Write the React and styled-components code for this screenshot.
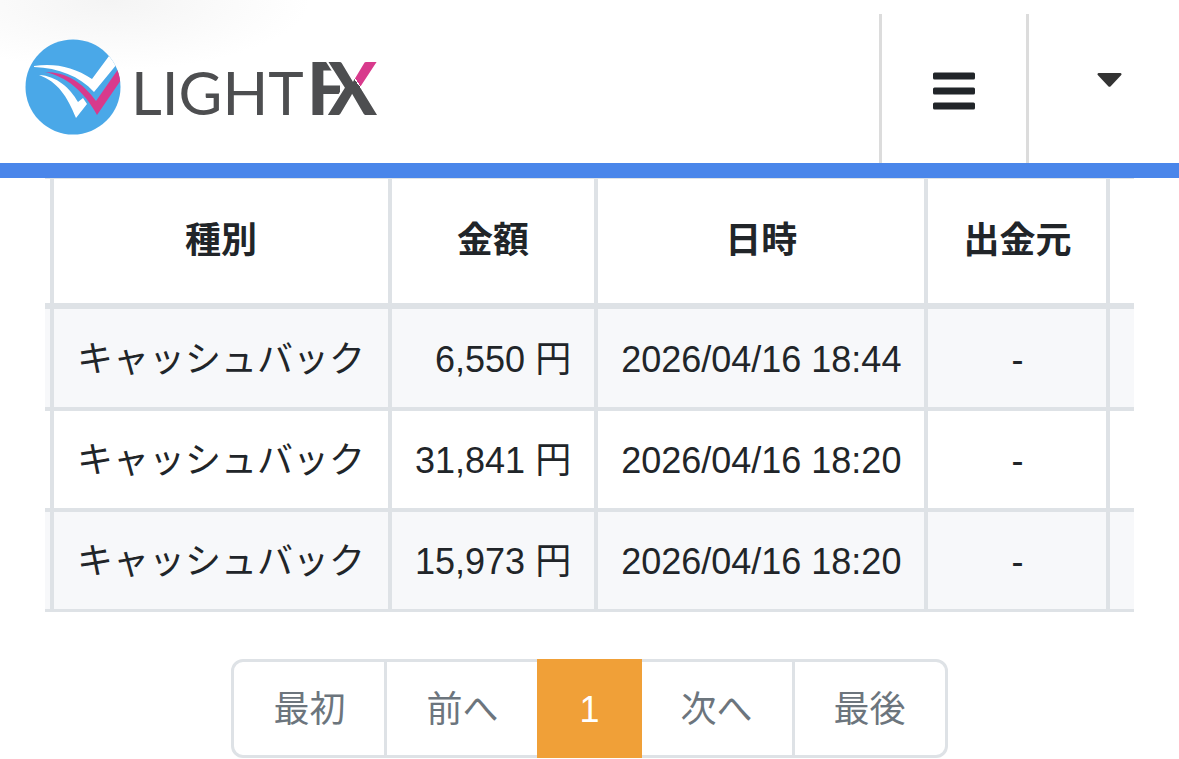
import React, { useState } from "react";
import styled, { createGlobalStyle } from "styled-components";

const GlobalStyle = createGlobalStyle`
  * {
    box-sizing: border-box;
  }

  body {
    margin: 0;
    background-color: #fff;
    color: #212529;
    font-family: "Liberation Sans", "Noto Sans CJK JP", sans-serif;
    font-size: 36px;
  }
`;

const Header = styled.header`
  display: flex;
  align-items: flex-start;
  justify-content: space-between;
  border-bottom: 15px solid #4a86ea;
  background: radial-gradient(ellipse 200px 70px at 110px 0, #f4f4f4, #fff);
`;

const LogoLink = styled.a`
  display: block;
  margin: 39px 0 0 25px;
`;

const LogoSvg = styled.svg`
  display: block;
  width: 352px;
  height: 96px;
`;

const LogoText = styled.text`
  font-family: Lato, "Liberation Sans", sans-serif;
  font-size: ${({ $size }) => $size || 72}px;
  font-weight: ${({ $weight }) => $weight || 400};
  fill: ${({ $fill }) => $fill || "#4d4e50"};
`;

const HeaderMenu = styled.nav`
  display: flex;
  margin-top: 14px;
`;

const HeaderButton = styled.button`
  display: flex;
  justify-content: center;
  width: ${({ $width }) => $width}px;
  height: 149px;
  padding: ${({ $padding }) => $padding};
  border: 0;
  border-left: 3px solid #dcdcdc;
  background: transparent;
  cursor: pointer;
`;

const Main = styled.main`
  padding: 0 45px;
`;

const Table = styled.table`
  width: 100%;
  border-collapse: separate;
  border-spacing: 0;
  line-height: 53px;
  white-space: nowrap;
`;

const Th = styled.th`
  padding: 35px ${({ $wide }) => ($wide ? 35 : 23)}px 36px;
  border-top: 1px solid #dee2e6;
  border-right: 4px solid #dee2e6;
  border-bottom: 6px solid #dee2e6;
  font-weight: 700;
`;

const Td = styled.td`
  padding: 23px 23px 21px;
  border-right: 4px solid #dee2e6;
  border-bottom: 4px solid #dee2e6;
  text-align: ${({ $align }) => $align || "center"};
`;

const EdgeTh = styled(Th)`
  width: ${({ $last }) => ($last ? "100%" : "9px")};
  padding: 0 ${({ $last }) => ($last ? 0 : 5)}px 0 0;
  border-right-width: ${({ $last }) => ($last ? 0 : 4)}px;
`;

const EdgeTd = styled(Td)`
  padding: 0;
  border-right-width: ${({ $last }) => ($last ? 0 : 4)}px;
`;

const Row = styled.tr`
  &:nth-child(odd) {
    background-color: #f7f8fa;
  }

  &:first-child > td {
    padding-top: 24px;
  }

  &:last-child > td {
    border-bottom-width: 3px;
  }
`;

const Pagination = styled.ul`
  display: flex;
  justify-content: center;
  margin: 47px 0 0;
  padding: 0;
  list-style: none;
`;

const PageItem = styled.li`
  & + & {
    margin-left: -3px;
  }
`;

const PageButton = styled.button`
  position: relative;
  z-index: ${({ $active }) => ($active ? 1 : 0)};
  display: block;
  padding: 21px 39px 18px;
  border: 3px solid ${({ $active }) => ($active ? "#f0a038" : "#dee2e6")};
  background-color: ${({ $active }) => ($active ? "#f0a038" : "#fff")};
  color: ${({ $active }) => ($active ? "#fff" : "#6c757d")};
  font: inherit;
  line-height: 54px;
  cursor: pointer;

  ${PageItem}:first-child & {
    border-radius: 12px 0 0 12px;
  }

  ${PageItem}:last-child & {
    border-radius: 0 12px 12px 0;
  }
`;

const rows = [
  { type: "キャッシュバック", amount: "6,550 円", date: "2026/04/16 18:44", source: "-" },
  { type: "キャッシュバック", amount: "31,841 円", date: "2026/04/16 18:20", source: "-" },
  { type: "キャッシュバック", amount: "15,973 円", date: "2026/04/16 18:20", source: "-" },
];

const Logo = () => (
  <LogoSvg viewBox="0 0 352 96" role="img" aria-label="LIGHT FX">
    <defs>
      <clipPath id="disc">
        <circle cx="48" cy="48" r="47.5" />
      </clipPath>
      <clipPath id="behind">
        <rect x="284" y="0" width="31" height="96" />
      </clipPath>
      {/* grey up to the long diagonal of the X, pink past it */}
      <linearGradient id="arm" gradientUnits="userSpaceOnUse" x1="330" y1="41" x2="337" y2="36">
        <stop offset="0" stopColor="#4d4e50" />
        <stop offset="0" stopColor="#fff" />
        <stop offset="0.12" stopColor="#fff" />
        <stop offset="0.12" stopColor="#d83a8c" />
      </linearGradient>
    </defs>
    <circle cx="48" cy="48" r="47.5" fill="#4aa8e8" />
    <g clipPath="url(#disc)">
      <path
        d="M9 27C30 24 49 28 67 40L84 17L92 25L69 53C54 37 34 29 9 28Z"
        fill="#fff"
      />
      <path
        d="M14 36C32 37 45 49 53 63L58 59L62 65L51 79C42 57 33 43 14 36Z"
        fill="#fff"
      />
      <path
        d="M20 33C42 33 58 44 71 62L94 29L98 38L72 76C59 52 42 38 20 33Z"
        fill="#d83a8c"
      />
    </g>
    <LogoText x="106" y="76" $size={60}>LIGHT</LogoText>
    <LogoText x="282" y="76" $weight={900} clipPath="url(#behind)">F</LogoText>
    <LogoText
      x="303"
      y="76"
      $weight={900}
      $fill="url(#arm)"
      stroke="#fff"
      strokeWidth="4"
      paintOrder="stroke"
    >
      X
    </LogoText>
  </LogoSvg>
);

const App = () => {
  const [page, setPage] = useState(1);

  return (
    <>
      <GlobalStyle />
      <Header>
        <LogoLink href="#">
          <Logo />
        </LogoLink>
        <HeaderMenu>
          <HeaderButton type="button" aria-label="メニュー" $width={147} $padding="58px 0 0">
            <svg width="42" height="38" viewBox="0 0 42 38" fill="#212529">
              <rect y="0.5" width="42" height="7" rx="1.5" />
              <rect y="15.5" width="42" height="7" rx="1.5" />
              <rect y="30.5" width="42" height="7" rx="1.5" />
            </svg>
          </HeaderButton>
          <HeaderButton type="button" aria-label="アカウント" $width={153} $padding="59px 0 0 10px">
            <svg width="25" height="14" viewBox="0 0 25 14" fill="#333">
              <path d="M1.5 0H23.5Q25.3 .8 24 2.3L13.7 13.2Q12.5 14.3 11.3 13.2L1 2.3Q-.3 .8 1.5 0Z" />
            </svg>
          </HeaderButton>
        </HeaderMenu>
      </Header>
      <Main>
        <Table>
          <thead>
            <tr>
              <EdgeTh as="td" />
              <Th>種別</Th>
              <Th>金額</Th>
              <Th>日時</Th>
              <Th $wide>出金元</Th>
              <EdgeTh as="td" $last />
            </tr>
          </thead>
          <tbody>
            {rows.map((row, index) => (
              <Row key={index}>
                <EdgeTd />
                <Td>{row.type}</Td>
                <Td $align="right">{row.amount}</Td>
                <Td>{row.date}</Td>
                <Td>{row.source}</Td>
                <EdgeTd $last />
              </Row>
            ))}
          </tbody>
        </Table>
        <Pagination>
          <PageItem>
            <PageButton type="button" onClick={() => setPage(1)}>最初</PageButton>
          </PageItem>
          <PageItem>
            <PageButton type="button" onClick={() => setPage(1)}>前へ</PageButton>
          </PageItem>
          <PageItem>
            <PageButton type="button" $active aria-current="page">{page}</PageButton>
          </PageItem>
          <PageItem>
            <PageButton type="button" onClick={() => setPage(1)}>次へ</PageButton>
          </PageItem>
          <PageItem>
            <PageButton type="button" onClick={() => setPage(1)}>最後</PageButton>
          </PageItem>
        </Pagination>
      </Main>
    </>
  );
};

export default App;
